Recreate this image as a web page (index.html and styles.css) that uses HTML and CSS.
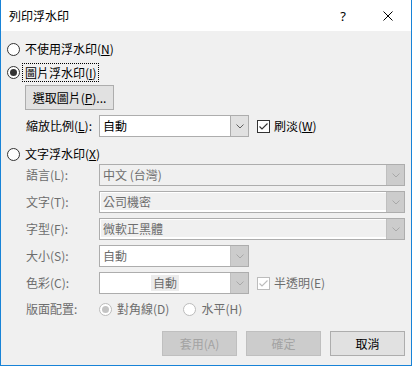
FILE: index.html
```html
<!DOCTYPE html>
<html lang="zh-Hant">
<head>
<meta charset="utf-8">
<title>列印浮水印</title>
<link rel="stylesheet" href="styles.css">
</head>
<body>
<div class="win">
  <div class="titlebar">
    <span class="title">列印浮水印</span>
    <span class="help">?</span>
    <span class="close"><svg width="10" height="10" viewBox="0 0 10 10"><path d="M0.5 0.5L9.5 9.5M9.5 0.5L0.5 9.5" stroke="#000" stroke-width="1" fill="none"/></svg></span>
  </div>
  <div class="content">
    <div class="radio-row r1"><span class="radio"></span><span class="txt">不使用浮水印(<u>N</u>)</span></div>
    <div class="radio-row r2"><span class="radio checked"></span><span class="txt focus">圖片浮水印(<u>I</u>)</span></div>
    <button class="btn pick">選取圖片(<u>P</u>)...</button>
    <div class="scale-row">
      <span class="lbl">縮放比例(<u>L</u>):</span>
      <div class="combo half white">
        <span class="val">自動</span>
        <span class="drop"><svg width="8" height="5" viewBox="0 0 8 5"><path d="M0.5 0.5L4 4L7.5 0.5" stroke="#606060" fill="none"/></svg></span>
      </div>
      <span class="check"><svg width="11" height="11" viewBox="0 0 11 11"><path d="M1.5 5.5L4 8L9.5 2.5" stroke="#333" stroke-width="1.1" fill="none"/></svg></span>
      <span class="ctext">刷淡(<u>W</u>)</span>
    </div>
    <div class="radio-row r3"><span class="radio"></span><span class="txt">文字浮水印(<u>X</u>)</span></div>
    <div class="grid">
      <span class="lbl dis">語言(L):</span>
      <div class="combo full dis gray"><span class="val">中文 (台灣)</span><span class="drop"><svg width="8" height="5" viewBox="0 0 8 5"><path d="M0.5 0.5L4 4L7.5 0.5" stroke="#a8a8a8" fill="none"/></svg></span></div>
      <span class="lbl dis">文字(T):</span>
      <div class="combo full dis edit"><span class="val">公司機密</span><span class="drop"><svg width="8" height="5" viewBox="0 0 8 5"><path d="M0.5 0.5L4 4L7.5 0.5" stroke="#a8a8a8" fill="none"/></svg></span></div>
      <span class="lbl dis">字型(F):</span>
      <div class="combo full dis edit"><span class="val">微軟正黑體</span><span class="drop"><svg width="8" height="5" viewBox="0 0 8 5"><path d="M0.5 0.5L4 4L7.5 0.5" stroke="#a8a8a8" fill="none"/></svg></span></div>
      <span class="lbl dis">大小(S):</span>
      <div class="combo half dis white"><span class="val">自動</span><span class="drop"><svg width="8" height="5" viewBox="0 0 8 5"><path d="M0.5 0.5L4 4L7.5 0.5" stroke="#a8a8a8" fill="none"/></svg></span></div>
      <span class="lbl dis">色彩(C):</span>
      <div class="color-row">
        <div class="combo half dis white center"><span class="val"><span class="hl">自動</span></span><span class="drop"><svg width="8" height="5" viewBox="0 0 8 5"><path d="M0.5 0.5L4 4L7.5 0.5" stroke="#a8a8a8" fill="none"/></svg></span></div>
        <span class="check dis"><svg width="11" height="11" viewBox="0 0 11 11"><path d="M1.5 5.5L4 8L9.5 2.5" stroke="#bcbcbc" stroke-width="1.1" fill="none"/></svg></span>
        <span class="ctext dis">半透明(E)</span>
      </div>
    </div>
    <div class="layout-row">
      <span class="lbl dis">版面配置:</span>
      <span class="radio dis checked"></span><span class="rtext dis">對角線(D)</span>
      <span class="radio dis second"></span><span class="rtext dis">水平(H)</span>
    </div>
    <div class="buttons">
      <button class="btn dbtn" disabled>套用(A)</button>
      <button class="btn dbtn" disabled>確定</button>
      <button class="btn">取消</button>
    </div>
  </div>
</div>
</body>
</html>
```
FILE: styles.css
```css
* { box-sizing: border-box; margin: 0; padding: 0; }
html, body { width: 412px; height: 366px; overflow: hidden; }
body {
  font-family: "Noto Sans CJK TC", "Noto Sans", sans-serif;
  font-size: 12px;
  color: #000;
  background: #f0f0f0;
}
u { text-decoration: underline; text-underline-offset: 1px; }

.win {
  width: 412px;
  height: 366px;
  border: 1px solid #1883d7;
  border-top: none;
  background: #f0f0f0;
  display: flex;
  flex-direction: column;
}
.titlebar {
  flex: none;
  height: 31px;
  background: #fff;
  display: flex;
  align-items: center;
}
.title { flex: 1; padding-left: 8px; line-height: 16px; padding-top: 1px; }
.help {
  width: 30px;
  margin-right: 7px;
  text-align: center;
  font-family: "Noto Sans", sans-serif;
  font-size: 13px;
  line-height: 16px;
}
.close { width: 46px; height: 31px; display: flex; align-items: center; justify-content: center; }

.content {
  padding: 8px 6px 0 6px;
  display: flex;
  flex-direction: column;
  align-items: flex-start;
}
.radio-row { height: 20px; display: flex; align-items: center; }
.r2 { margin-top: 3px; }
.r3 { margin-top: 7px; }
.radio {
  flex: none;
  width: 13px;
  height: 13px;
  border: 1px solid #333;
  border-radius: 50%;
  background: #fff;
  display: flex;
  align-items: center;
  justify-content: center;
}
.radio.checked::after {
  content: "";
  width: 7px;
  height: 7px;
  border-radius: 50%;
  background: #333;
}
.radio.dis { border-color: #bcbcbc; }
.radio.dis.checked::after { background: #c4c4c4; }
.txt { margin-left: 5px; line-height: 16px; }
.focus {
  margin-left: 2px;
  height: 19px;
  padding: 1px 1px 0 2px;
  border: 1px dotted #000;
  line-height: 16px;
}

.btn {
  font-family: inherit;
  font-size: 12px;
  color: #000;
  background: #e1e1e1;
  border: 1px solid #adadad;
  height: 25px;
  line-height: 16px;
  display: flex;
  align-items: center;
  justify-content: center;
}
.pick { margin-top: 3px; margin-left: 18px; width: 89px; }
.dbtn { background: #cccccc; border-color: #bfbfbf; color: #a3a3a3; }

.scale-row {
  margin-top: 5px;
  margin-left: 19px;
  height: 22px;
  display: flex;
  align-items: center;
}
.lbl { width: 73px; flex: none; line-height: 16px; }
.lbl.dis { color: #6d6d6d; }

.combo {
  height: 22px;
  border: 1px solid #adadad;
  display: flex;
  align-items: stretch;
}
.combo.half { width: 150px; }
.combo.full { width: 306px; }
.combo.white { background: #fff; }
.combo.gray { background: #f0f0f0; }
.combo.edit { background: #f0f0f0; box-shadow: inset 1px 1px 0 #fff, inset 0 -2px 0 #fff; }
.val {
  flex: 1;
  padding-left: 3px;
  display: flex;
  align-items: center;
  line-height: 16px;
}
.combo.dis .val { color: #6d6d6d; }
.combo.center .val { justify-content: center; padding-left: 0; }
.hl { background: #ececec; padding: 0 2px; }
.drop {
  flex: none;
  width: 18px;
  background: #e1e1e1;
  border-left: 1px solid #adadad;
  display: flex;
  align-items: center;
  justify-content: center;
}
.combo.dis .drop { background: #cccccc; border-left-color: #bfbfbf; }

.check {
  flex: none;
  margin-left: 8px;
  width: 13px;
  height: 13px;
  border: 1px solid #333;
  background: #fff;
  display: flex;
  align-items: center;
  justify-content: center;
}
.check.dis { border-color: #bcbcbc; }
.ctext { margin-left: 4px; line-height: 16px; }
.ctext.dis { color: #6d6d6d; }

.grid {
  margin-left: 19px;
  display: grid;
  grid-template-columns: 73px auto;
  row-gap: 5px;
  align-items: center;
}
.color-row { display: flex; align-items: center; }

.layout-row {
  margin-top: 5px;
  margin-left: 19px;
  height: 20px;
  display: flex;
  align-items: center;
}
.layout-row .radio.second { margin-left: 14px; }
.rtext { margin-left: 5px; line-height: 16px; }
.rtext.dis { color: #6d6d6d; }

.buttons {
  margin-top: 12px;
  align-self: stretch;
  display: flex;
  justify-content: flex-end;
  gap: 9px;
}
.buttons .btn { width: 75px; }
```
